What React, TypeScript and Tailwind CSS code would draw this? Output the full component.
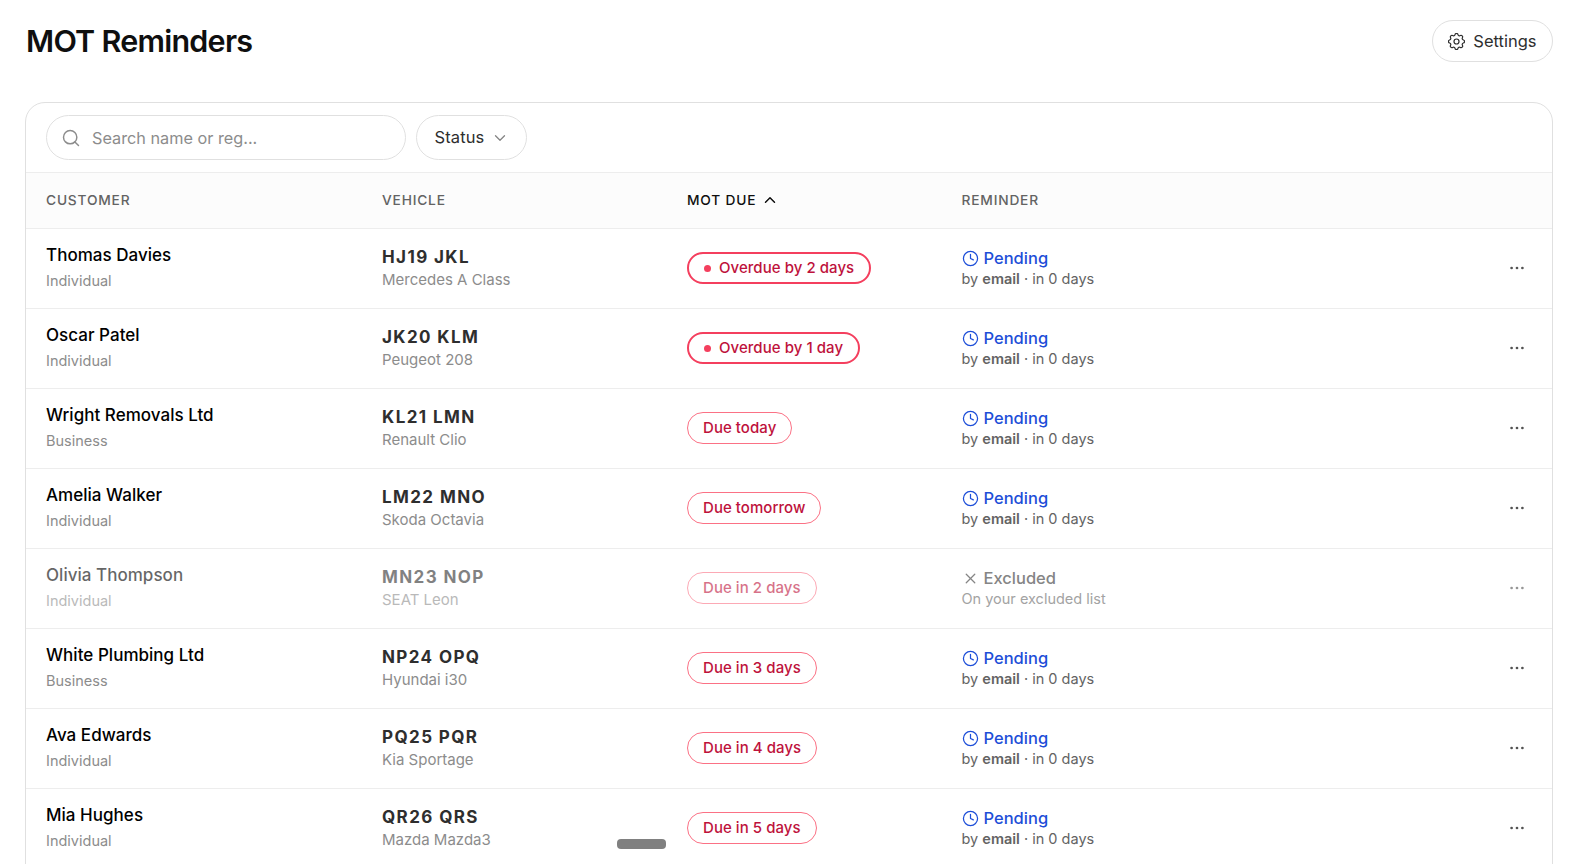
import clsx from "clsx";
import { LuChevronDown, LuChevronUp, LuClock4, LuSearch, LuX } from "react-icons/lu";

type Reminder = {
  customer: string;
  kind: string;
  plate: string;
  vehicle: string;
  due: string;
  overdue?: boolean;
  excluded?: boolean;
};

const reminders: Reminder[] = [
  { customer: "Thomas Davies", kind: "Individual", plate: "HJ19 JKL", vehicle: "Mercedes A Class", due: "Overdue by 2 days", overdue: true },
  { customer: "Oscar Patel", kind: "Individual", plate: "JK20 KLM", vehicle: "Peugeot 208", due: "Overdue by 1 day", overdue: true },
  { customer: "Wright Removals Ltd", kind: "Business", plate: "KL21 LMN", vehicle: "Renault Clio", due: "Due today" },
  { customer: "Amelia Walker", kind: "Individual", plate: "LM22 MNO", vehicle: "Skoda Octavia", due: "Due tomorrow" },
  { customer: "Olivia Thompson", kind: "Individual", plate: "MN23 NOP", vehicle: "SEAT Leon", due: "Due in 2 days", excluded: true },
  { customer: "White Plumbing Ltd", kind: "Business", plate: "NP24 OPQ", vehicle: "Hyundai i30", due: "Due in 3 days" },
  { customer: "Ava Edwards", kind: "Individual", plate: "PQ25 PQR", vehicle: "Kia Sportage", due: "Due in 4 days" },
  { customer: "Mia Hughes", kind: "Individual", plate: "QR26 QRS", vehicle: "Mazda Mazda3", due: "Due in 5 days" },
];

function GearIcon() {
  return (
    <svg className="size-[17px]" viewBox="2.5 2.5 19 19" fill="none" stroke="currentColor" strokeWidth="1.35" strokeLinejoin="round">
      <path d="M10.325 4.317c.426 -1.756 2.924 -1.756 3.35 0a1.724 1.724 0 0 0 2.573 1.066c1.543 -.94 3.31 .826 2.37 2.37a1.724 1.724 0 0 0 1.065 2.572c1.756 .426 1.756 2.924 0 3.35a1.724 1.724 0 0 0 -1.066 2.573c.94 1.543 -.826 3.31 -2.37 2.37a1.724 1.724 0 0 0 -2.572 1.065c-.426 1.756 -2.924 1.756 -3.35 0a1.724 1.724 0 0 0 -2.573 -1.066c-1.543 .94 -3.31 -.826 -2.37 -2.37a1.724 1.724 0 0 0 -1.065 -2.572c-1.756 -.426 -1.756 -2.924 0 -3.35a1.724 1.724 0 0 0 1.066 -2.573c-.94 -1.543 .826 -3.31 2.37 -2.37c1 .608 2.296 .07 2.572 -1.065" />
      <circle cx="12" cy="12" r="2.8" />
    </svg>
  );
}

function DotsIcon() {
  return (
    <svg className="w-4 h-1" viewBox="0 0 16 4" fill="currentColor">
      <circle cx="2.6" cy="2" r="1.35" />
      <circle cx="8" cy="2" r="1.35" />
      <circle cx="13.4" cy="2" r="1.35" />
    </svg>
  );
}

function ReminderRow({ row }: { row: Reminder }) {
  return (
    <div className="grid grid-cols-[336px_305px_274.5px_1fr_30px] items-center h-20 px-5 pb-0.5 border-b border-[#ededed]">
      <div className={clsx(row.excluded && "opacity-60")}>
        <div className="text-[17px] leading-6 font-medium tracking-[0.03px] text-black">{row.customer}</div>
        <div className="mt-0.5 text-[14.5px] leading-6 text-[#8c8c8c]">{row.kind}</div>
      </div>
      <div className={clsx("pt-px", row.excluded && "opacity-60")}>
        <div className="text-[17px] leading-[23px] font-bold tracking-[1.4px] text-[#2e2e2e]">{row.plate}</div>
        <div className="text-[15px] leading-[22px] text-[#8c8c8c]">{row.vehicle}</div>
      </div>
      <div className={clsx("flex", row.excluded && "opacity-60")}>
        <span
          className={clsx(
            "inline-flex items-center h-8 pt-px rounded-full text-[15px] font-medium tracking-[0.05px] text-[#be123c]",
            row.overdue ? "gap-2 px-[15px] border-2 border-[#f43f5e]" : "px-[15px] border border-[#fb7185]"
          )}
        >
          {row.overdue && <span className="size-[7px] rounded-full bg-[#f43f5e]" />}
          {row.due}
        </span>
      </div>
      <div className="pb-px">
        {row.excluded ? (
          <>
            <div className="flex items-center gap-[5px] text-[16.5px] leading-6 font-medium text-[#858585]">
              <LuX className="size-[17px]" strokeWidth={1.75} />
              Excluded
            </div>
            <div className="text-[14.5px] leading-[18px] text-[#a3a3a3]">On your excluded list</div>
          </>
        ) : (
          <>
            <div className="flex items-center gap-[5px] text-[16.5px] leading-6 font-medium text-[#1d4ed8]">
              <LuClock4 className="size-[17px]" strokeWidth={1.75} />
              Pending
            </div>
            <div className="text-[14.5px] leading-[18px] text-[#636363]">
              by <b className="font-semibold">email</b> · in 0 days
            </div>
          </>
        )}
      </div>
      <button className={clsx("flex justify-center text-[#525252]", row.excluded && "opacity-60")} aria-label="Row actions">
        <DotsIcon />
      </button>
    </div>
  );
}

export default function App() {
  return (
    <main className="h-[864px] overflow-hidden bg-white pl-[25px] pr-6 font-['Inter',sans-serif]">
      <header className="flex items-center justify-between pt-5">
        <h1 className="pl-px font-semibold text-[30.5px] leading-[42px] tracking-[-0.75px] text-[#0f0f0f]">MOT Reminders</h1>
        <button className="flex items-center gap-2 h-[42px] px-[15.5px] pt-px rounded-full border border-[#e0e0e0] text-[16.5px] text-[#2e2e2e]">
          <GearIcon />
          Settings
        </button>
      </header>

      <section className="mt-10 h-[900px] rounded-[20px] border border-[#e0e0e0] overflow-hidden">
        <div className="flex items-center gap-2.5 h-[70px] px-5 border-b border-[#ededed]">
          <label className="flex items-center gap-[11px] w-[360px] h-[45px] px-3.5 rounded-full border border-[#e0e0e0] text-[#8c8c8c]">
            <LuSearch className="size-5" strokeWidth={1.75} />
            <span className="pt-px text-[16.25px]">Search name or reg...</span>
          </label>
          <button className="flex items-center gap-[7px] w-[111px] h-[45px] pl-[17.5px] pr-4 rounded-full border border-[#e0e0e0] text-[16.5px] tracking-[0.1px] text-[#2e2e2e]">
            Status
            <LuChevronDown className="size-[18px] shrink-0 text-[#858585]" strokeWidth={1.75} />
          </button>
        </div>

        <div className="grid grid-cols-[336px_305px_274.5px_1fr_30px] items-center h-14 px-5 pb-px border-b border-[#ededed] bg-[#fcfcfc] text-[13.75px] font-medium tracking-[0.8px] text-[#636363]">
          <span>CUSTOMER</span>
          <span>VEHICLE</span>
          <span className="flex items-center gap-[5px] text-[#0f0f0f]">
            MOT DUE
            <LuChevronUp className="size-[18px]" />
          </span>
          <span>REMINDER</span>
        </div>

        {reminders.map((row) => (
          <ReminderRow key={row.plate} row={row} />
        ))}
      </section>

      {/* drag handle */}
      <div className="fixed left-[617px] top-[839px] w-[49px] h-[10px] rounded-[4px] bg-[#808080]" />
    </main>
  );
}
